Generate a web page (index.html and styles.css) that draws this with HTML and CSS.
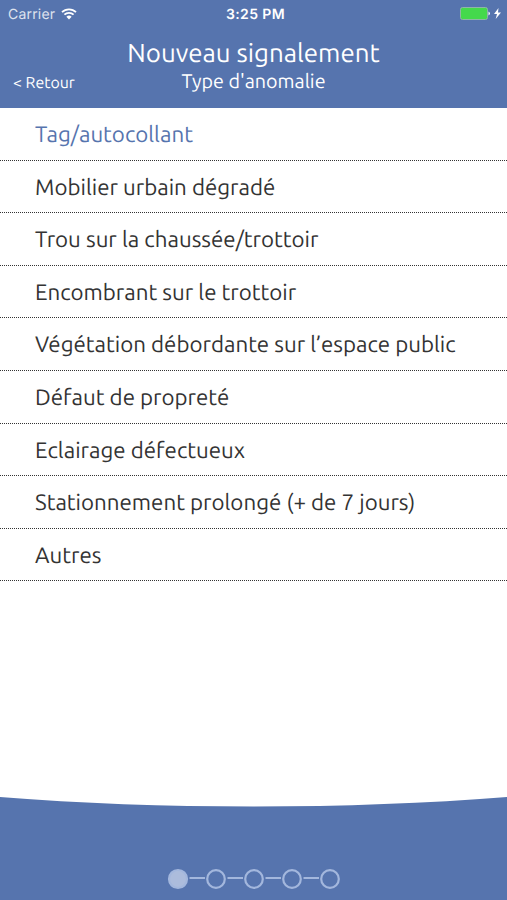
FILE: index.html
```html
<!DOCTYPE html>
<html lang="fr">
<head>
    <meta charset="UTF-8">
    <meta name="viewport" content="width=device-width, initial-scale=1.0">
    <title>Nouveau signalement</title>
    <link rel="stylesheet" href="styles.css">
</head>
<body>
    <header class="header">
        <div class="status-bar">
            <div class="carrier">
                <span class="carrier-label">Carrier</span>
                <svg class="wifi" width="16" height="12" viewBox="0 0 16 12">
                    <path d="M1 4.2a10 10 0 0 1 14 0M3.4 6.7a6.6 6.6 0 0 1 9.2 0" fill="none" stroke="#fff" stroke-width="1.8"/>
                    <path d="M5.4 8.7a3.8 3.8 0 0 1 5.2 0L8 11.4z" fill="#fff"/>
                </svg>
            </div>
            <span class="clock">3:25 PM</span>
            <svg class="battery" width="42" height="14" viewBox="0 0 42 14">
                <rect x="1.5" y="0.5" width="27" height="12" rx="2" fill="#44d94c" stroke="#8fb5a8"/>
                <path d="M29.5 4.5v4q3-2 0-4z" fill="#fff"/>
                <path d="M39.5 1L35 7.1h3L36.7 12 42 5.5h-3z" fill="#fff"/>
            </svg>
        </div>
        <h1>Nouveau signalement</h1>
        <div class="subheader">
            <a class="back" href="#">&lt; Retour</a>
            <h2>Type d'anomalie</h2>
        </div>
    </header>
    <ul class="types">
        <li class="selected">Tag/autocollant</li>
        <li>Mobilier urbain dégradé</li>
        <li>Trou sur la chaussée/trottoir</li>
        <li>Encombrant sur le trottoir</li>
        <li>Végétation débordante sur l’espace public</li>
        <li>Défaut de propreté</li>
        <li>Eclairage défectueux</li>
        <li>Stationnement prolongé (+ de 7 jours)</li>
        <li>Autres</li>
    </ul>
    <footer class="footer">
        <svg width="507" height="104" viewBox="0 0 507 104">
            <path d="M0 1Q120 10.5 253.5 10.5T507 1V104H0z" fill="#5674ae"/>
            <g fill="none" stroke="#a3b7dd" stroke-width="2.2">
                <circle cx="178" cy="83" r="9" fill="#acbcdc"/>
                <circle cx="216" cy="83" r="8.8"/>
                <circle cx="254" cy="83" r="8.8"/>
                <circle cx="292" cy="83" r="8.8"/>
                <circle cx="330" cy="83" r="8.8"/>
                <path d="M189.5 82h15.5M227.5 82h15.5M265.5 82h15.5M303.5 82h15.5"/>
            </g>
        </svg>
    </footer>
</body>
</html>
```

FILE: styles.css
```css
* {
    box-sizing: border-box;
}

body {
    margin: 0;
    height: 100vh;
    display: flex;
    flex-direction: column;
    background-color: #fff;
    font-family: Ubuntu, "Noto Sans", sans-serif;
    text-rendering: geometricPrecision;
    color: #333;
    overflow: hidden;
}

svg {
    display: block;
}

.header {
    height: 108px;
    background-color: #5674ae;
    color: #fff;
}

.status-bar {
    height: 28px;
    padding: 0 6px 0 8px;
    display: grid;
    grid-template-columns: 1fr auto 1fr;
    align-items: center;
    font-family: Inter, sans-serif;
    font-size: 14px;
}

.carrier {
    display: flex;
    align-items: center;
    gap: 6px;
}

.carrier-label {
    opacity: 0.8;
    letter-spacing: 0.2px;
}

.clock {
    font-weight: 600;
    letter-spacing: 0.4px;
    padding-left: 2px;
}

.battery {
    justify-self: end;
}

h1 {
    margin: 7px 0 0;
    line-height: 36px;
    text-align: center;
    font-size: 25.9px;
    font-weight: 400;
}

.subheader {
    display: grid;
    grid-template-columns: 1fr auto 1fr;
    padding-left: 13px;
    padding-right: 13px;
}

.back {
    color: #fff;
    font-size: 15.9px;
    line-height: 25px;
    text-decoration: none;
}

h2 {
    margin: 0;
    font-size: 19.7px;
    line-height: 21px;
    font-weight: 400;
}

.types {
    flex: 1;
    margin: 0;
    padding: 0;
    list-style: none;
    font-size: 22.3px;
}

.types li {
    height: 52.6px;
    padding-left: 35px;
    line-height: 53px;
    border-bottom: 1px dotted #333;
}

.types .selected {
    color: #5674ae;
}

.footer {
    height: 104px;
}
```
